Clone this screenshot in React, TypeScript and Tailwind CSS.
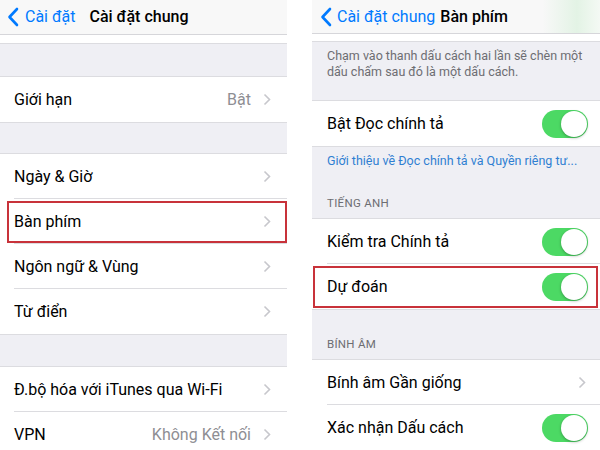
import React from "react";

const font = { fontFamily: '"Roboto", "Noto Sans", sans-serif' };

function Chevron() {
  return (
    <svg width="8" height="13" viewBox="0 0 8 13" className="shrink-0">
      <path d="M1.5 1.5 L6.5 6.5 L1.5 11.5" fill="none" stroke="#c7c7cc" strokeWidth="1.6" />
    </svg>
  );
}

function BackChevron() {
  return (
    <svg width="12" height="20" viewBox="0 0 12 20" className="shrink-0">
      <path d="M10 2 L2.5 10 L10 18" fill="none" stroke="#007aff" strokeWidth="2.6" strokeLinecap="round" strokeLinejoin="round" />
    </svg>
  );
}

function Toggle() {
  return (
    <div className="w-[46px] h-[28px] rounded-full bg-[#4cd964] relative shrink-0">
      <div className="absolute right-[1px] top-[1px] w-[26px] h-[26px] rounded-full bg-white shadow-[0_1px_3px_rgba(0,0,0,0.3)]" />
    </div>
  );
}

function Row({
  label,
  value,
  chevron,
  toggle,
  sep = true,
  highlight,
  pad = "pl-[14px] pr-[16px]",
  sepInset = "left-[14px]",
}: {
  label: string;
  value?: string;
  chevron?: boolean;
  toggle?: boolean;
  sep?: boolean;
  highlight?: string;
  pad?: string;
  sepInset?: string;
}) {
  return (
    <div className={`relative h-[45px] shrink-0 bg-white flex items-center ${pad}`}>
      <span className="flex-1 text-[16px] text-black">{label}</span>
      {value && <span className="text-[16px] text-[#8e8e93] mr-[12px]">{value}</span>}
      {chevron && <Chevron />}
      {toggle && <Toggle />}
      {sep && <div className={`absolute bottom-0 right-0 h-px bg-[#dcdce0] ${sepInset}`} />}
      {highlight && <div className={`absolute border-2 border-[#c8323a] ${highlight}`} />}
    </div>
  );
}

function LeftPanel() {
  return (
    <div className="w-[287px] h-[450px] bg-[#efeff4] flex flex-col overflow-hidden">
      <div className="h-[35px] bg-[#f8f8f8] border-b border-[#d6d6da] flex items-center pl-[7px] shrink-0">
        <BackChevron />
        <span className="ml-[6px] text-[16px] text-[#007aff]">Cài đặt</span>
        <span className="ml-[14px] text-[16px] font-medium text-black">Cài đặt chung</span>
      </div>
      <div className="h-[9px] bg-white border-b border-[#dcdce0] shrink-0" />
      <div className="h-[33px] shrink-0 border-b border-[#dcdce0]" />
      <Row label="Giới hạn" value="Bật" chevron sep={false} />
      <div className="h-[32px] shrink-0 border-t border-b border-[#dcdce0]" />
      <Row label="Ngày & Giờ" chevron />
      <Row label="Bàn phím" chevron highlight="left-[7px] right-0 top-[2px] bottom-[1px]" />
      <Row label="Ngôn ngữ & Vùng" chevron />
      <Row label="Từ điển" chevron sep={false} />
      <div className="h-[33px] shrink-0 border-t border-b border-[#dcdce0]" />
      <Row label="Đ.bộ hóa với iTunes qua Wi-Fi" chevron />
      <Row label="VPN" value="Không Kết nối" chevron sep={false} />
    </div>
  );
}

function RightPanel() {
  return (
    <div className="w-[288px] h-[450px] bg-[#efeff4] flex flex-col overflow-hidden">
      <div className="h-[34px] bg-[linear-gradient(90deg,#f8f8f8_0%,#f8f8f8_80%,#e3f3e5_92%,#f4f9f4_100%)] border-b border-[#d6d6da] flex items-center pl-[8px] shrink-0">
        <BackChevron />
        <span className="ml-[5px] text-[16px] text-[#007aff]">Cài đặt chung</span>
        <span className="ml-[5px] text-[16px] font-medium text-black">Bàn phím</span>
      </div>
      <div className="h-[8px] bg-white border-b border-[#dcdce0] shrink-0" />
      <div className="h-[58px] shrink-0 px-[15px] pt-[6px] text-[12.5px] leading-[16px] text-[#6d6d72]">
        Chạm vào thanh dấu cách hai lần sẽ chèn một dấu chấm sau đó là một dấu cách.
      </div>
      <div className="border-t border-[#dcdce0] shrink-0">
        <Row label="Bật Đọc chính tả" toggle sep={false} pad="pl-[15px] pr-[12px]" />
      </div>
      <div className="h-[73px] shrink-0 border-t border-b border-[#dcdce0] px-[15px] flex flex-col">
        <span className="pt-[6px] text-[12.5px] leading-[16px] text-[#2f7fd2] whitespace-nowrap">
          Giới thiệu về Đọc chính tả và Quyền riêng tư...
        </span>
        <span className="mt-[26px] text-[11.5px] text-[#6d6d72] tracking-wide">TIẾNG ANH</span>
      </div>
      <Row label="Kiểm tra Chính tả" toggle pad="pl-[15px] pr-[12px]" sepInset="left-[15px]" />
      <Row
        label="Dự đoán"
        toggle
        sep={false}
        pad="pl-[15px] pr-[12px]"
        highlight="left-[1px] right-[2px] top-[2px] bottom-[1px]"
      />
      <div className="h-[51px] shrink-0 border-t border-b border-[#dcdce0] px-[15px] flex items-end pb-[6px]">
        <span className="text-[11.5px] text-[#6d6d72] tracking-wide">BÍNH ÂM</span>
      </div>
      <Row label="Bính âm Gần giống" chevron pad="pl-[15px] pr-[14px]" sepInset="left-[15px]" />
      <Row label="Xác nhận Dấu cách" toggle sep={false} pad="pl-[15px] pr-[12px]" />
    </div>
  );
}

export default function App() {
  return (
    <div className="w-[600px] h-[450px] bg-white flex overflow-hidden" style={font}>
      <LeftPanel />
      <div className="w-[25px] shrink-0 bg-white" />
      <RightPanel />
    </div>
  );
}
